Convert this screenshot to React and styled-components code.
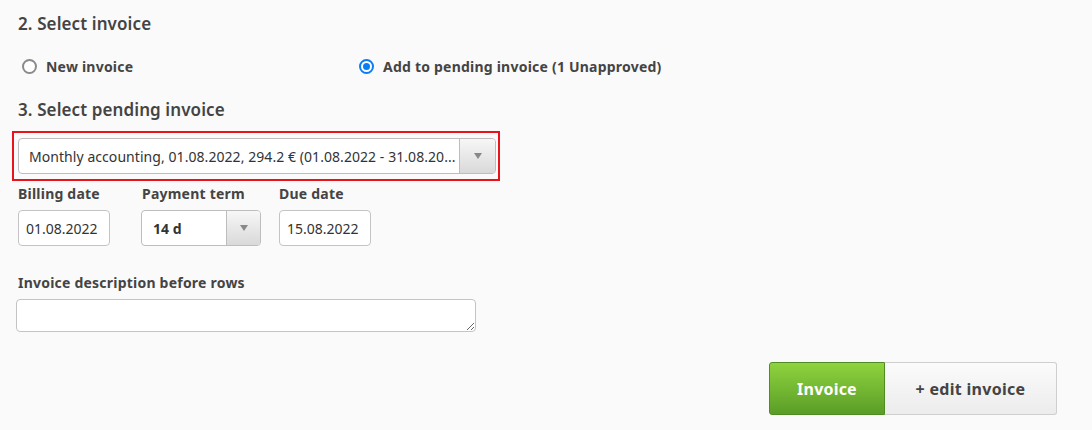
import React from "react";
import styled, { createGlobalStyle } from "styled-components";

const Global = createGlobalStyle`
  html, body { margin: 0; padding: 0; background: #fafafa; }
  body { font-family: "Noto Sans", "Open Sans", sans-serif; color: #444; }
`;

const Page = styled.div`
  width: 1092px;
  height: 430px;
  box-sizing: border-box;
  padding: 13px 35px 0 18px;
  background: #fafafa;
`;

const Heading = styled.h2`
  margin: 0;
  font-size: 17px;
  line-height: 22px;
  font-weight: 600;
  letter-spacing: 0.1px;
  color: #444;
`;

const RadioRow = styled.div`
  display: flex;
  align-items: center;
  margin: 20px 0 22px 4px;
  height: 22px;
`;

const RadioOption = styled.label`
  display: flex;
  align-items: center;
  gap: 9px;
  width: ${(p) => p.$width || "auto"};
  font-size: 14px;
  font-weight: 700;
  letter-spacing: 0.22px;
  color: #444;
`;

const RadioCircle = styled.span`
  box-sizing: border-box;
  width: 15px;
  height: 15px;
  border-radius: 50%;
  border: 2px solid ${(p) => (p.$checked ? "#0a7cf5" : "#8a8a8f")};
  background: #fff;
  display: flex;
  align-items: center;
  justify-content: center;
  &::after {
    content: "";
    display: ${(p) => (p.$checked ? "block" : "none")};
    width: 7px;
    height: 7px;
    border-radius: 50%;
    background: #0a7cf5;
  }
`;

const Highlight = styled.div`
  margin: 10px 0 0 -6px;
  width: 488px;
  box-sizing: border-box;
  border: 2px solid #e8141b;
  padding: 5px 2px 5px 4px;
`;

const SelectBox = styled.div`
  box-sizing: border-box;
  display: flex;
  width: ${(p) => p.$width};
  height: ${(p) => p.$height || "36px"};
  border: 1px solid #bdbdbd;
  border-radius: 4px;
  background: #fff;
  overflow: hidden;
`;

const SelectText = styled.div`
  flex: 1;
  display: flex;
  align-items: center;
  padding-left: ${(p) => p.$pad || "10px"};
  font-size: 14px;
  font-weight: ${(p) => (p.$bold ? 700 : 400)};
  letter-spacing: 0.06px;
  color: #333;
  white-space: nowrap;
  overflow: hidden;
`;

const SelectArrow = styled.div`
  width: ${(p) => p.$w || "34px"};
  border-left: 1px solid #bdbdbd;
  background: linear-gradient(#f7f7f7, #d9d9d9);
  display: flex;
  align-items: center;
  justify-content: center;
  &::after {
    content: "";
    border-left: 4px solid transparent;
    border-right: 4px solid transparent;
    border-top: 6px solid #888;
  }
`;

const FieldRow = styled.div`
  display: flex;
  margin-top: 2px;
`;

const Field = styled.div`
  width: ${(p) => p.$width};
  display: flex;
  flex-direction: column;
`;

const Label = styled.div`
  font-size: 14px;
  line-height: 22px;
  font-weight: 700;
  letter-spacing: 0.22px;
  color: #444;
  margin-bottom: 5px;
  margin-left: ${(p) => p.$ml || "0"};
`;

const TextInput = styled.div`
  box-sizing: border-box;
  width: ${(p) => p.$width};
  height: 36px;
  border: 1px solid #c4c4c4;
  border-radius: 4px;
  background: #fff;
  display: flex;
  align-items: center;
  padding-left: 7px;
  font-size: 14px;
  color: #333;
`;

const DescLabel = styled(Label)`
  margin: 26px 0 5px 0;
`;

const TextArea = styled.textarea`
  display: block;
  box-sizing: border-box;
  width: 460px;
  height: 33px;
  margin-left: -2px;
  border: 1px solid #c4c4c4;
  border-radius: 4px;
  background: #fff;
  font-family: inherit;
  resize: both;
  outline: none;
`;

const ButtonRow = styled.div`
  display: flex;
  justify-content: flex-end;
  margin-top: 30px;
`;

const PrimaryButton = styled.button`
  box-sizing: border-box;
  width: 116px;
  height: 53px;
  border: 1px solid #4f8d22;
  border-radius: 3px 0 0 3px;
  background: linear-gradient(#8fd33f, #5a9d27);
  color: #fff;
  font-family: inherit;
  font-size: 16px;
  font-weight: 700;
  letter-spacing: 0.2px;
`;

const SecondaryButton = styled.button`
  box-sizing: border-box;
  width: 172px;
  height: 53px;
  border: 1px solid #cfcfcf;
  border-left: none;
  border-radius: 0 3px 3px 0;
  background: linear-gradient(#fbfbfb, #ececec);
  color: #444;
  font-family: inherit;
  font-size: 16px;
  font-weight: 700;
  letter-spacing: 0.3px;
`;

export default function App() {
  return (
    <>
      <Global />
      <Page>
        <Heading>2. Select invoice</Heading>
        <RadioRow>
          <RadioOption $width="337px">
            <RadioCircle />
            New invoice
          </RadioOption>
          <RadioOption>
            <RadioCircle $checked />
            Add to pending invoice (1 Unapproved)
          </RadioOption>
        </RadioRow>
        <Heading>3. Select pending invoice</Heading>
        <Highlight>
          <SelectBox $width="478px">
            <SelectText>
              Monthly accounting, 01.08.2022, 294.2 € (01.08.2022 - 31.08.20...
            </SelectText>
            <SelectArrow $w="35px" />
          </SelectBox>
        </Highlight>
        <FieldRow>
          <Field $width="123px">
            <Label>Billing date</Label>
            <TextInput $width="92px">01.08.2022</TextInput>
          </Field>
          <Field $width="138px">
            <Label $ml="1px">Payment term</Label>
            <SelectBox $width="120px" $height="36px">
              <SelectText $bold $pad="11px">14 d</SelectText>
              <SelectArrow $w="33px" />
            </SelectBox>
          </Field>
          <Field $width="100px">
            <Label>Due date</Label>
            <TextInput $width="92px">15.08.2022</TextInput>
          </Field>
        </FieldRow>
        <DescLabel>Invoice description before rows</DescLabel>
        <TextArea />
        <ButtonRow>
          <PrimaryButton>Invoice</PrimaryButton>
          <SecondaryButton>+ edit invoice</SecondaryButton>
        </ButtonRow>
      </Page>
    </>
  );
}
